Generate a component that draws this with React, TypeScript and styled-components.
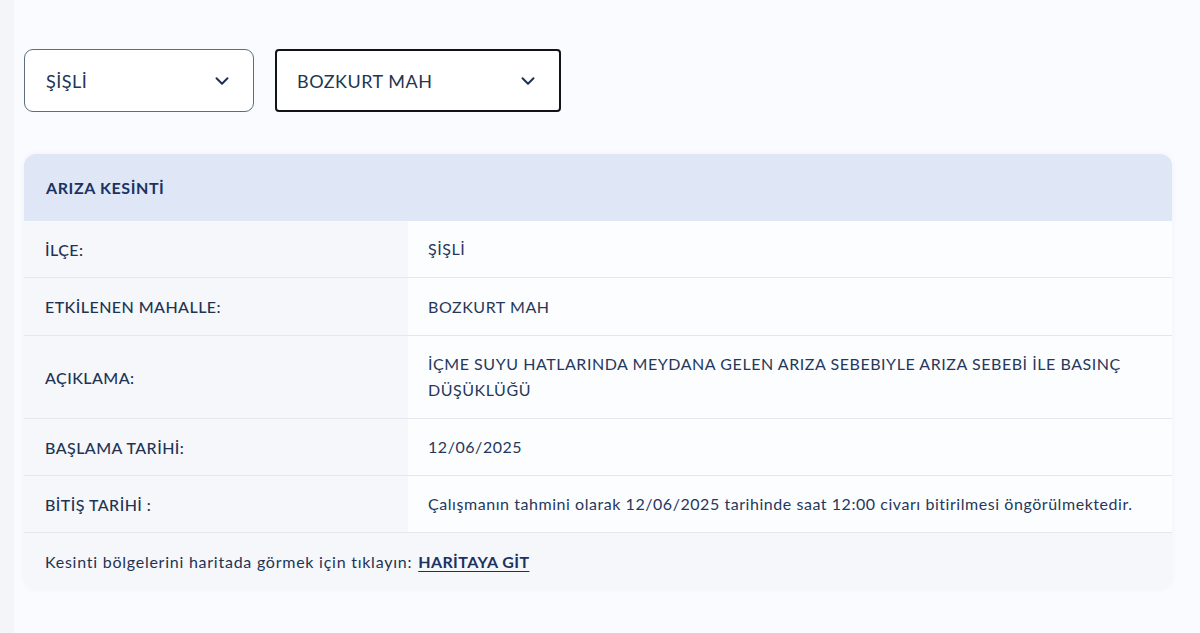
import React from "react";
import styled, { createGlobalStyle } from "styled-components";
import { ChevronDown } from "lucide-react";

const GlobalStyle = createGlobalStyle`
  html, body {
    margin: 0;
    padding: 0;
    background: #f9fbfe;
    font-family: Lato, "Noto Sans", "Liberation Sans", sans-serif;
    color: #1f3352;
  }
`;

const Page = styled.div`
  display: flex;
  min-height: 633px;
`;

const Rail = styled.div`
  width: 14px;
  flex-shrink: 0;
  background: #f3f5f9;
`;

const Content = styled.div`
  flex: 1;
  padding: 49px 14px 0 10px;
`;

const Filters = styled.div`
  display: flex;
  gap: 21px;
`;

const Select = styled.div<{ $width: number; $active?: boolean }>`
  box-sizing: border-box;
  width: ${(p) => p.$width}px;
  height: 63px;
  display: flex;
  align-items: center;
  justify-content: space-between;
  padding: 0 20px 0 ${(p) => (p.$active ? 20 : 21)}px;
  background: #ffffff;
  border: ${(p) => (p.$active ? "2px solid #111318" : "1px solid #5d6d80")};
  border-radius: ${(p) => (p.$active ? 4 : 9)}px;
  font-size: 18px;
  letter-spacing: 0.5px;
  color: #24364f;
`;

const Card = styled.div`
  margin-top: 42px;
  width: 1148px;
  border-radius: 12px;
  overflow: hidden;
  background: #f5f7fb;
  box-shadow: 0 0 6px rgba(30, 50, 90, 0.04);
`;

const CardHeader = styled.div`
  height: 67px;
  display: flex;
  align-items: center;
  padding-left: 22px;
  background: #dfe7f6;
  font-size: 16px;
  font-weight: 700;
  letter-spacing: 0.6px;
  color: #1c3262;
`;

const Row = styled.div<{ $height: number }>`
  display: grid;
  grid-template-columns: 384px 1fr;
  min-height: ${(p) => p.$height}px;
  border-top: 1px solid #e4e8ee;
  &:first-of-type {
    border-top: none;
  }
`;

const Label = styled.div`
  display: flex;
  align-items: center;
  padding-left: 21px;
  background: #f5f7fb;
  font-size: 16px;
  font-weight: 500;
  letter-spacing: 0.45px;
  color: #1f3352;
`;

const Value = styled.div`
  display: flex;
  align-items: center;
  padding: 12px 14px 12px 20px;
  background: #fcfdff;
  font-size: 16px;
  line-height: 26px;
  letter-spacing: 0.55px;
  color: #26385a;
`;

const Footer = styled.div`
  height: 56px;
  display: flex;
  align-items: center;
  padding-left: 21px;
  border-top: 1px solid #e4e8ee;
  font-size: 16px;
  letter-spacing: 0.75px;
  color: #1f3352;
`;

const MapLink = styled.a`
  margin-left: 6px;
  font-weight: 700;
  letter-spacing: 0.4px;
  color: #1c3262;
  text-decoration: underline;
  text-underline-offset: 3px;
`;

const rows = [
  { label: "İLÇE:", value: "ŞİŞLİ", height: 56 },
  { label: "ETKİLENEN MAHALLE:", value: "BOZKURT MAH", height: 57 },
  {
    label: "AÇIKLAMA:",
    value:
      "İÇME SUYU HATLARINDA MEYDANA GELEN ARIZA SEBEBIYLE ARIZA SEBEBİ İLE BASINÇ DÜŞÜKLÜĞÜ",
    height: 82,
  },
  { label: "BAŞLAMA TARİHİ:", value: "12/06/2025", height: 56 },
  {
    label: "BİTİŞ TARİHİ :",
    value:
      "Çalışmanın tahmini olarak 12/06/2025 tarihinde saat 12:00 civarı bitirilmesi öngörülmektedir.",
    height: 56,
  },
];

export default function App() {
  return (
    <Page>
      <GlobalStyle />
      <Rail />
      <Content>
        <Filters>
          <Select $width={230}>
            <span>ŞİŞLİ</span>
            <ChevronDown size={22} strokeWidth={2.2} color="#1d3352" />
          </Select>
          <Select $width={286} $active>
            <span>BOZKURT MAH</span>
            <ChevronDown size={22} strokeWidth={2.2} color="#1d3352" />
          </Select>
        </Filters>
        <Card>
          <CardHeader>ARIZA KESİNTİ</CardHeader>
          <div>
            {rows.map((r) => (
              <Row key={r.label} $height={r.height}>
                <Label>{r.label}</Label>
                <Value>{r.value}</Value>
              </Row>
            ))}
          </div>
          <Footer>
            Kesinti bölgelerini haritada görmek için tıklayın:
            <MapLink href="#">HARİTAYA GİT</MapLink>
          </Footer>
        </Card>
      </Content>
    </Page>
  );
}
